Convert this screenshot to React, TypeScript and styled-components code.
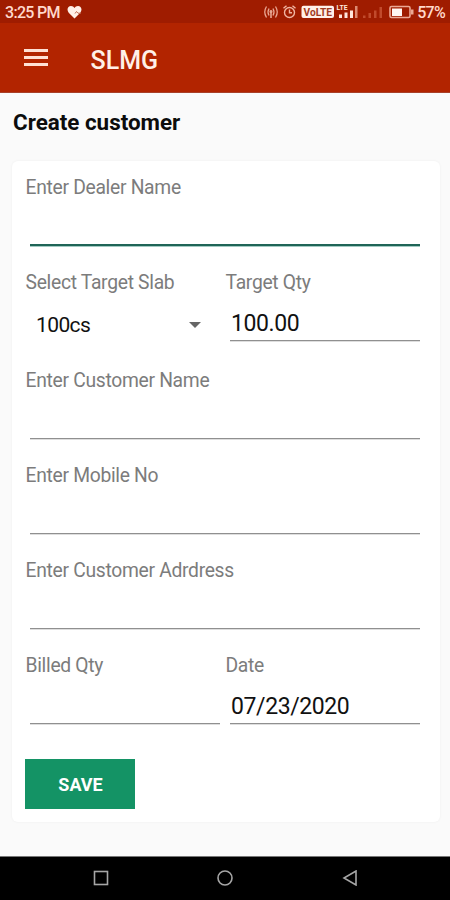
import React from 'react';
import styled, { createGlobalStyle } from 'styled-components';

const Global = createGlobalStyle`
  *, *::before, *::after { box-sizing: border-box; }
  body { margin: 0; font-family: Roboto, "Liberation Sans", sans-serif; background: #fafafa; }
`;

const Screen = styled.div`
  width: 450px;
  height: 900px;
  display: flex;
  flex-direction: column;
  overflow: hidden;
  background: #fafafa;
`;

const StatusBar = styled.div`
  height: 23px;
  flex: none;
  display: flex;
  justify-content: space-between;
  align-items: flex-start;
  padding: 0 5px 0 5px;
  background: #9f1c00;
  color: #ffd9cc;
`;

const StatusText = styled.span`
  font-size: 16px;
  line-height: 25px;
  font-weight: 500;
  letter-spacing: -0.7px;
  white-space: nowrap;
`;

const StatusGroup = styled.div`
  display: flex;
  height: 24px;
`;

const HeartIcon = styled.svg`
  width: 15px;
  height: 24px;
  margin-left: 7px;
`;

const StatusIcons = styled.svg`
  width: 154px;
  height: 24px;
  margin-right: 1px;
`;

const AppBar = styled.header`
  height: 70px;
  flex: none;
  display: flex;
  align-items: center;
  padding-left: 23.5px;
  background: #b22400;
  border-bottom: 1px solid #a8412a;
`;

const MenuButton = styled.button`
  width: 24px;
  height: 17px;
  padding: 0;
  border: 0;
  background: none;
  display: flex;
  flex-direction: column;
  justify-content: space-between;
`;

const MenuLine = styled.span`
  height: 3px;
  width: 100%;
  background: #ffe0d4;
`;

const AppTitle = styled.div`
  margin: 6px 0 0 43px;
  font-size: 25px;
  line-height: 30px;
  font-weight: 500;
  color: #fff0e8;
`;

const Content = styled.main`
  flex: 1;
  padding: 15px 10px 0 12px;
`;

const PageTitle = styled.h1`
  margin: 0 0 25px 1px;
  font-size: 22.4px;
  line-height: 28px;
  font-weight: 700;
  color: #0c0c0c;
`;

const Card = styled.form`
  height: 661px;
  padding: 14px 20px 0 13px;
  background: #fff;
  border-radius: 6px;
  box-shadow: 0 0 3px rgba(0, 0, 0, 0.05);
`;

const Row = styled.div<{ $height?: number }>`
  display: flex;
  gap: 5px;
  height: ${p => p.$height ?? 95}px;
`;

const Field = styled.div`
  flex: 1;
  min-width: 0;
`;

const Label = styled.label`
  display: block;
  height: 24px;
  padding-left: 0.5px;
  font-size: 19.3px;
  line-height: 26px;
  letter-spacing: -0.3px;
  color: #7c7c7c;
  white-space: nowrap;
`;

const Input = styled.input<{ $focused?: boolean }>`
  display: block;
  width: calc(100% - 5px);
  height: 47px;
  margin-left: 5px;
  padding: 13px 0 0 1px;
  border: 0;
  border-bottom: ${p => (p.$focused ? '2px solid #1f6557' : '1px solid #909090')};
  box-shadow: ${p => (p.$focused ? '0 1px 0 #a3cbc3' : '0 1px 0 #dedede')};
  border-radius: 0;
  outline: 0;
  background: none;
  font: 400 23px/30px Roboto, sans-serif;
  letter-spacing: -0.4px;
  color: #111;
`;

const Select = styled.div`
  display: flex;
  align-items: center;
  justify-content: space-between;
  height: 30px;
  margin: 16px 19px 0 11px;
  font-size: 21px;
  letter-spacing: -0.6px;
  color: #111;
`;

const Caret = styled.svg`
  width: 12px;
  height: 6px;
`;

const SaveButton = styled.button`
  display: block;
  width: 110px;
  height: 50px;
  margin-top: 11px;
  padding: 1px 0 0 1px;
  border: 0;
  background: #149365;
  color: #fff;
  font: 700 18px/50px Roboto, sans-serif;
`;

const NavBar = styled.nav`
  height: 44px;
  flex: none;
  background: #000;
  border-top: 1px solid #777;
  display: flex;
  justify-content: space-between;
  align-items: center;
  padding: 0 92.5px 2px;
`;

const NavIcon = styled.svg`
  width: 16px;
  height: 16px;
  fill: none;
  stroke: #a6a6a6;
  stroke-width: 1.6;
`;

export default function App() {
  return (
    <Screen>
      <Global />
      <StatusBar>
        <StatusGroup>
          <StatusText>3:25 PM</StatusText>
          <HeartIcon viewBox="0 0 15 24">
            <path d="M7.500 18.500 1.700 12.700C-.8 9.500 1 6 4 6c1.600 0 2.800.9 3.500 2C8.200 6.900 9.400 6 11 6c3 0 4.800 3.500 2.300 6.700z" fill="#fff0e8" />
            <path d="M8 13.500l1.500-2 1.500 1.700h3" fill="none" stroke="#c06a50" strokeWidth="1" />
          </HeartIcon>
        </StatusGroup>
        <StatusGroup>
          <StatusIcons viewBox="0 0 154 24">
            <g fill="none" stroke="#e9a793" strokeWidth="1.3">
              <path d="M4.500 6.500q-3.500 5.500 0 11M7 8.500q-2 3.500 0 7M13.500 6.500q3.500 5.500 0 11M11 8.500q2 3.500 0 7" />
              <path d="M9 12v6" strokeWidth="1.600" />
              <circle cx="9" cy="11.500" r="0.900" fill="#e9a793" />
            </g>
            <g fill="none" stroke="#f0b5a2" strokeWidth="1.400">
              <circle cx="27.500" cy="12.500" r="5" />
              <path d="M27.500 9.500v3.300h2.500M21.500 8.300l3-2.500M33.500 8.300l-3-2.500" />
            </g>
            <rect x="39.500" y="5.700" width="32.500" height="12.300" rx="2" fill="#fff0ea" />
            <text x="41.500" y="15.500" fontSize="10" fontWeight="700" textLength="28.500" lengthAdjust="spacingAndGlyphs" fill="#a13a22">VoLTE</text>
            <text x="74.500" y="9.500" fontSize="7" fontWeight="700" textLength="11" lengthAdjust="spacingAndGlyphs" fill="#ffe6dc">LTE</text>
            <path d="M77 14.500h3V18h-3zM82.500 12.500h3V18h-3zM88 10.500h3V18h-3z" fill="#ffe6dc" />
            <path d="M93 6h2.500v12H93z" fill="#dc8a72" />
            <path d="M101 15.500h2.500V18H101zM106.500 13h2.500v5h-2.500zM112 10.500h2.500V18H112zM117.500 7h2.500v11h-2.500z" fill="#c14a2c" />
            <rect x="128" y="6.500" width="20" height="11" rx="1.500" fill="none" stroke="#eba894" strokeWidth="1.600" />
            <path d="M149 9.500h2.500v5H149z" fill="#eba894" />
            <path d="M130 8.500h10v7.500h-10z" fill="#fff6f2" />
          </StatusIcons>
          <StatusText>57%</StatusText>
        </StatusGroup>
      </StatusBar>
      <AppBar>
        <MenuButton aria-label="Menu"><MenuLine /><MenuLine /><MenuLine /></MenuButton>
        <AppTitle>SLMG</AppTitle>
      </AppBar>
      <Content>
        <PageTitle>Create customer</PageTitle>
        <Card>
          <Row><Field><Label>Enter Dealer Name</Label><Input $focused /></Field></Row>
          <Row $height={98}>
            <Field>
              <Label>Select Target Slab</Label>
              <Select>100cs<Caret viewBox="0 0 12 6"><path d="M0 0h12L6 6z" fill="#666" /></Caret></Select>
            </Field>
            <Field><Label>Target Qty</Label><Input defaultValue="100.00" /></Field>
          </Row>
          <Row><Field><Label>Enter Customer Name</Label><Input /></Field></Row>
          <Row><Field><Label>Enter Mobile No</Label><Input /></Field></Row>
          <Row><Field><Label>Enter Customer Adrdress</Label><Input /></Field></Row>
          <Row>
            <Field><Label>Billed Qty</Label><Input /></Field>
            <Field><Label>Date</Label><Input defaultValue="07/23/2020" /></Field>
          </Row>
          <SaveButton type="button">SAVE</SaveButton>
        </Card>
      </Content>
      <NavBar>
        <NavIcon viewBox="0 0 16 16"><rect x="1.500" y="1.500" width="13" height="13" /></NavIcon>
        <NavIcon viewBox="0 0 16 16"><circle cx="8" cy="8" r="7" /></NavIcon>
        <NavIcon viewBox="0 0 16 16"><path d="M14 1v14L2 8z" /></NavIcon>
      </NavBar>
    </Screen>
  );
}
